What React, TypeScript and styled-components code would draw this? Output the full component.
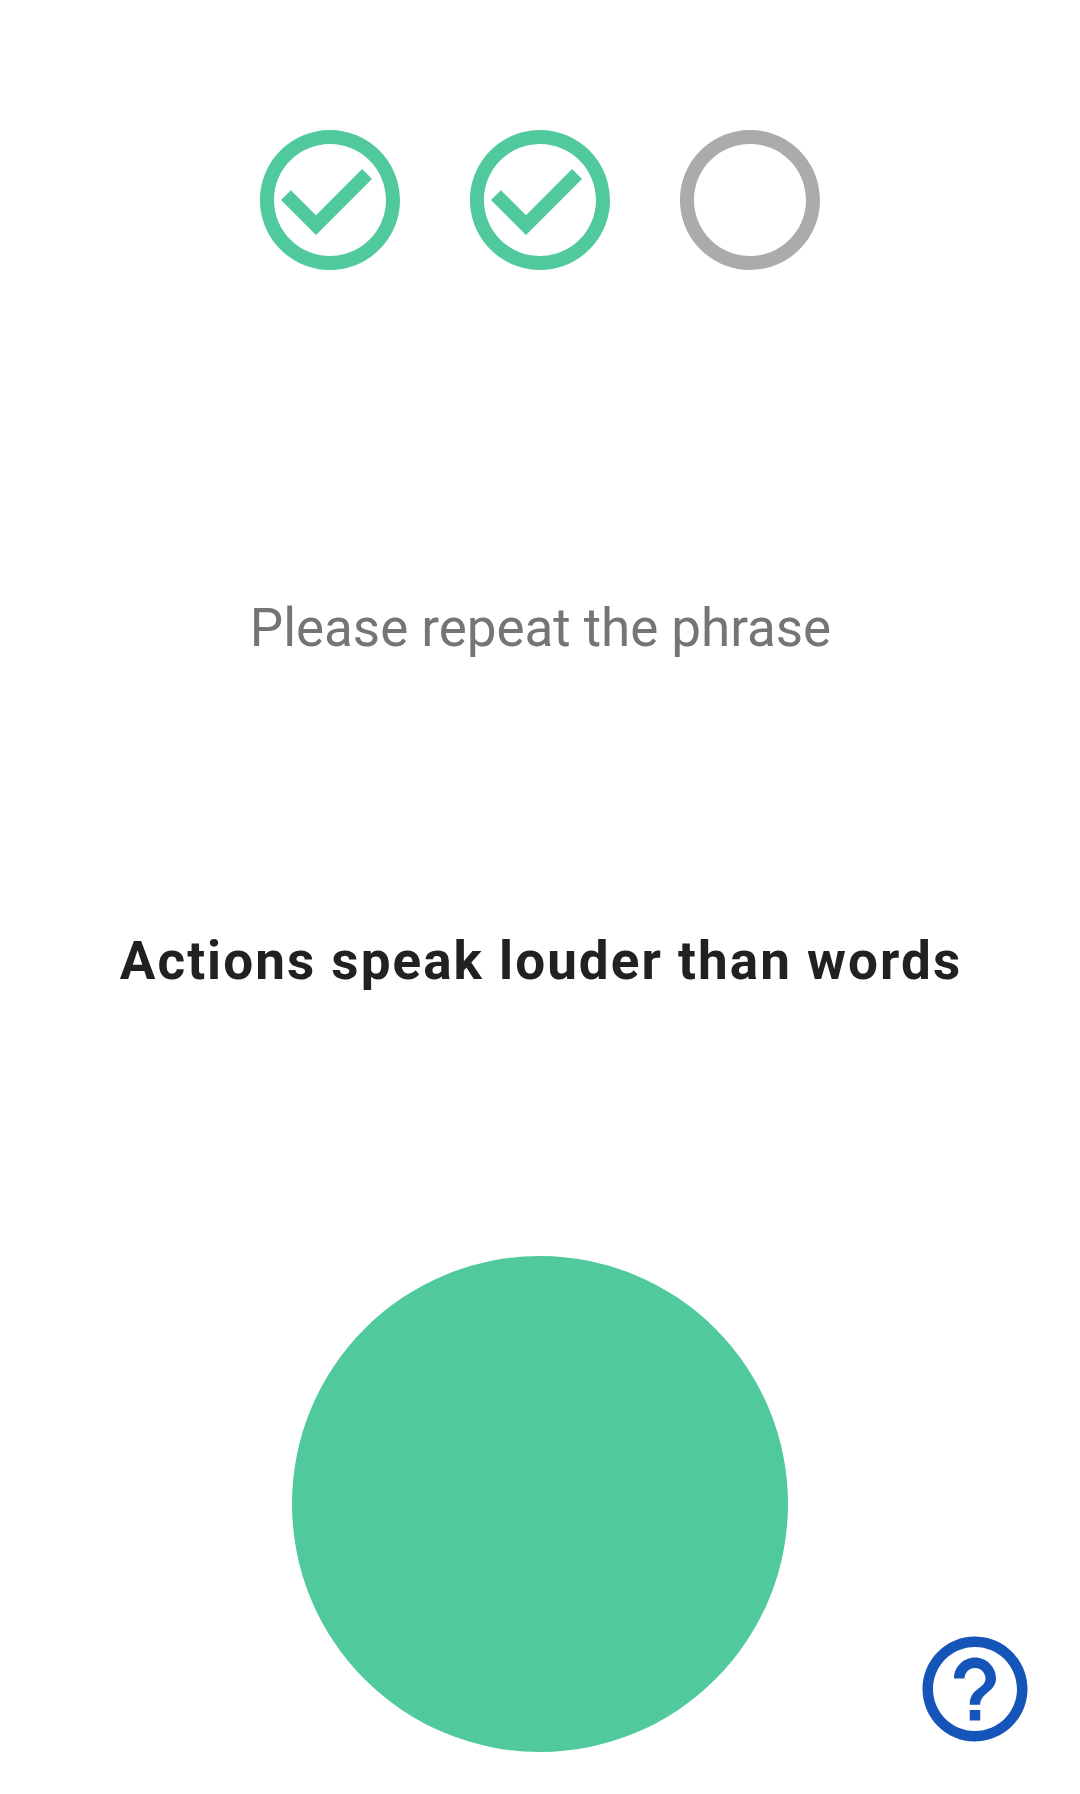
import React from "react";
import styled, { createGlobalStyle } from "styled-components";

const GlobalStyle = createGlobalStyle`
  *, *::before, *::after { box-sizing: border-box; }
  body { margin: 0; background: #ffffff; font-family: Roboto, "Noto Sans", sans-serif; }
`;

const Screen = styled.main`
  position: relative;
  display: flex;
  flex-direction: column;
  align-items: center;
  width: 1080px;
  height: 1794px;
  padding-top: 116px;
  overflow: hidden;
  background: #ffffff;
`;

const Progress = styled.div`
  display: flex;
  gap: 42px;
`;

const StepIcon = styled.svg<{ $done: boolean }>`
  display: block;
  width: 168px;
  height: 168px;
  fill: ${(p) => (p.$done ? "#50c99c" : "#ababab")};
`;

const Prompt = styled.p`
  margin: 312px 0 0;
  padding-left: 1px;
  font-size: 53px;
  line-height: 64px;
  font-weight: 400;
  letter-spacing: -0.05px;
  white-space: nowrap;
  color: #757575;
`;

const Phrase = styled.h1`
  margin: 269px 0 0;
  padding-left: 2px;
  font-size: 53px;
  line-height: 64px;
  font-weight: 700;
  letter-spacing: 2.04px;
  white-space: nowrap;
  color: #212121;
`;

const RecordButton = styled.button`
  width: 496px;
  height: 496px;
  margin: 263px 0 0;
  padding: 0;
  border: 0;
  border-radius: 50%;
  background: #50c99c;
`;

const HelpButton = styled.button`
  position: absolute;
  right: 42px;
  bottom: 42px;
  width: 126px;
  height: 126px;
  padding: 0;
  border: 0;
  background: transparent;
`;

const HelpIcon = styled.svg`
  display: block;
  width: 100%;
  height: 100%;
  fill: #1554b9;
`;

const RING = "M12 2C6.48 2 2 6.48 2 12s4.48 10 10 10 10-4.48 10-10S17.52 2 12 2zm0 18c-4.42 0-8-3.58-8-8s3.58-8 8-8 8 3.58 8 8-3.58 8-8 8z";
const CHECK = "M16.59 7.58L10 14.17l-3.59-3.58L5 12l5 5 8-8z";
const QUESTION = "M11 18h2v-2h-2v2zm1-12c-2.21 0-4 1.79-4 4h2c0-1.1.9-2 2-2s2 .9 2 2c0 2-3 1.75-3 5h2c0-2.25 3-2.5 3-5 0-2.21-1.79-4-4-4z";

function Step({ done }: { done: boolean }) {
  return (
    <StepIcon $done={done} viewBox="0 0 24 24" aria-hidden="true">
      <path d={RING} />
      {done && <path d={CHECK} />}
    </StepIcon>
  );
}

export default function App() {
  return (
    <>
      <GlobalStyle />
      <Screen>
        <Progress>
          <Step done />
          <Step done />
          <Step done={false} />
        </Progress>
        <Prompt>Please repeat the phrase</Prompt>
        <Phrase>Actions speak louder than words</Phrase>
        <RecordButton aria-label="Record" />
        <HelpButton aria-label="Help">
          <HelpIcon viewBox="0 0 24 24" aria-hidden="true">
            <path d={RING} />
            <path d={QUESTION} />
          </HelpIcon>
        </HelpButton>
      </Screen>
    </>
  );
}
